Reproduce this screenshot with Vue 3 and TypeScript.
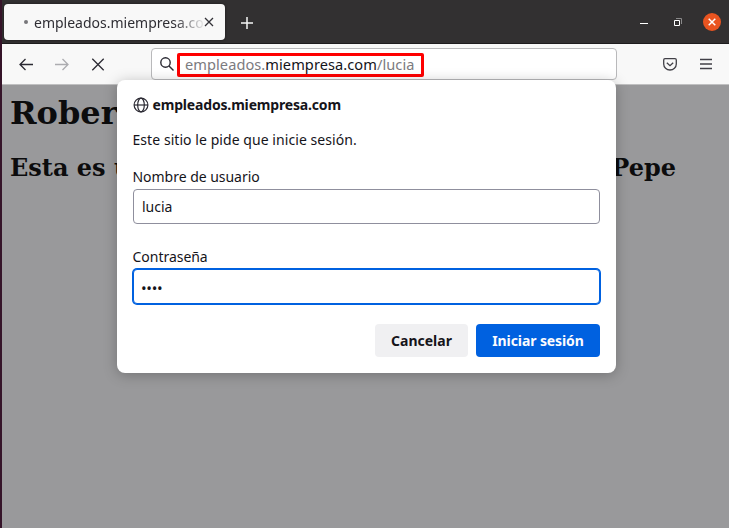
<script setup lang="ts">
import { ref } from 'vue'

const username = ref('lucia')
const password = ref('••••')
</script>

<template>
  <div class="window">
    <header class="titlebar">
      <div class="tab">
        <i class="loading"></i>
        <span class="tab-title">empleados.miempresa.com</span>
        <svg class="tab-close" viewBox="0 0 10 10"><path d="M1 1l8 8M9 1L1 9" /></svg>
      </div>
      <svg class="new-tab" viewBox="0 0 12 12"><path d="M6 0v12M0 6h12" /></svg>
      <div class="controls">
        <svg class="minimize" viewBox="0 0 8 2"><path d="M0 .5h8" /></svg>
        <svg class="restore" viewBox="0 0 8 8"><path class="back" d="M2 .5h5.500v5.500" /><path d="M.5 2.500h5v5h-5z" /></svg>
        <button class="close" aria-label="Cerrar">
          <svg viewBox="0 0 8 8"><path d="M.7.7l6.600 6.600M7.300.7L.7 7.300" /></svg>
        </button>
      </div>
    </header>

    <nav class="toolbar">
      <svg class="back-arrow" viewBox="0 0 14 12"><path d="M14 6.500H1M6.500 1L1 6.500l5.500 5.500" /></svg>
      <svg class="forward" viewBox="0 0 14 12"><path d="M0 6.500h13M7.500 1l5.500 5.500-5.500 5.500" /></svg>
      <svg class="stop" viewBox="0 0 12 12"><path d="M.3.8l11.400 11.400M11.700.8L.3 12.200" /></svg>
      <div class="urlbar">
        <svg class="search" viewBox="0 0 14 14"><circle cx="5.500" cy="5.500" r="4.700" /><path d="M9 9l4.500 4.500" /></svg>
        <div class="highlight">empleados.<b>miempresa.com</b>/lucia</div>
      </div>
      <svg class="pocket" viewBox="0 0 14 13"><path d="M2 .7h10q1.300 0 1.300 1.300v4a6.300 6 0 0 1-12.600 0V2Q.7.7 2 .7z" /><path d="M3.800 4.700L7 7.700l3.200-3" /></svg>
      <svg class="menu" viewBox="0 0 12 10"><path d="M0 .5h12M0 5h12M0 9.500h12" /></svg>
    </nav>

    <main class="page">
      <h1>Roberto</h1>
      <h2><span>Esta es una</span><span>Pepe</span></h2>
    </main>

    <form class="dialog" @submit.prevent>
      <div class="host">
        <svg viewBox="0 0 16 16"><circle cx="8" cy="8" r="6.900" /><ellipse cx="8" cy="8" rx="3.300" ry="6.900" /><path d="M1 8h14" /></svg>
        <strong>empleados.miempresa.com</strong>
      </div>
      <p>Este sitio le pide que inicie sesión.</p>
      <label for="user">Nombre de usuario</label>
      <input id="user" v-model="username" class="field" />
      <label for="pass" class="second">Contraseña</label>
      <input id="pass" v-model="password" class="field active" />
      <div class="actions">
        <button class="cancel" type="button">Cancelar</button>
        <button class="login" type="submit">Iniciar sesión</button>
      </div>
    </form>
  </div>
</template>

<style>
body { margin: 0; overflow: hidden; }
</style>

<style scoped>
* { box-sizing: border-box; }
svg { display: block; flex: none; fill: none; stroke: #2b2a33; stroke-width: 1.3; overflow: visible; }
.window {
  position: relative; width: 729px; height: 528px; overflow: hidden;
  display: flex; flex-direction: column; border-left: 2px solid #351429;
  background: #99999b; font-family: "Noto Sans", "Open Sans", sans-serif; color: #15141a;
}
.titlebar { height: 44px; flex: none; display: flex; align-items: flex-start; background: #323031; border-bottom: 1px solid #1d1c1d; }
.tab {
  width: 221px; height: 36px; margin: 4px 0 0 2px; padding: 0 11px 0 20px; display: flex; align-items: center;
  border-radius: 4px; background: #f8f8f8; box-shadow: 0 0 3px rgba(0, 0, 0, .5);
}
.loading { width: 4px; height: 4px; border-radius: 50%; background: #77767a; margin-right: 6px; flex: none; }
.tab-title {
  width: 169px; overflow: hidden; white-space: nowrap; line-height: 24px; font-size: 14px; color: #2f2e34; padding-top: 1px;
  -webkit-mask-image: linear-gradient(90deg, #000 140px, transparent 172px); mask-image: linear-gradient(90deg, #000 140px, transparent 172px);
}
.tab-close { width: 10px; height: 10px; margin-left: 1px; stroke: #333238; }
.new-tab { width: 12px; height: 12px; margin: 17px 0 0 16px; stroke: #f5f5f5; stroke-width: 1.500; }
.controls { display: flex; align-items: center; height: 44px; margin-left: auto; padding-right: 8px; }
.controls svg { stroke: #fff; stroke-width: 1; }
.minimize { width: 8px; height: 2px; margin: 4px 26px 0 0; }
.restore { width: 8px; height: 8px; margin-right: 21px; }
.restore .back { stroke: #8a898a; }
.close { width: 18px; height: 18px; border: 0; border-radius: 50%; padding: 5px; background: #e95420; }
.controls .close svg { width: 8px; height: 8px; stroke-width: 1.500; }
.toolbar { height: 41px; flex: none; display: flex; align-items: center; padding: 0 17px; background: #f8f8f8; border-bottom: 1px solid #c0c0c1; }
.back-arrow, .forward { width: 14px; height: 12px; }
.back-arrow { margin-right: 22px; }
.forward { margin-right: 23px; stroke: #acacb0; }
.stop { width: 12px; height: 12px; margin-right: 47px; }
.urlbar { width: 466px; height: 32px; margin-right: 46px; padding-left: 8px; display: flex; align-items: center; border: 1px solid #b9b9bb; border-radius: 4px; background: #fff; }
.search { width: 14px; height: 14px; margin-right: 3px; stroke-width: 1.400; }
.highlight { width: 247px; height: 24px; margin-top: 2px; padding-left: 5px; border: 3px solid #fe0000; border-radius: 2px; line-height: 17px; font-size: 14.600px; letter-spacing: .06px; white-space: nowrap; color: #7c7b80; }
.highlight b { font-weight: 400; color: #15141a; }
.pocket { width: 14px; height: 13px; margin-right: 23px; stroke: #414047; }
.menu { width: 12px; height: 10px; stroke: #414047; }
.page { padding: 8px; font-family: "DejaVu Serif", serif; color: #0c0c0d; }
h1 { margin: 1px 0 0; font-size: 32px; line-height: 38px; }
h2 { width: 666px; margin: 21px 0 0; display: flex; justify-content: space-between; font-size: 24px; line-height: 29px; }
.dialog {
  position: absolute; left: 115px; top: 80px; width: 499px; height: 293px; padding: 16px 16px 16px 15.5px;
  display: flex; flex-direction: column; border-radius: 8px; background: #fff; font-size: 14px; white-space: nowrap;
  box-shadow: 0 2px 14px rgba(0, 0, 0, .25);
}
.host { height: 17px; margin-bottom: 1px; display: flex; align-items: center; gap: 4px; letter-spacing: -.17px; }
.host svg { width: 16px; height: 16px; stroke-width: 1.200; }
.host strong { line-height: 17px; margin-top: -1px; }
p { margin: 16px 0 0; line-height: 20px; letter-spacing: .06px; }
label { display: block; margin-top: 17px; line-height: 20px; letter-spacing: -.03px; }
label.second { margin-top: 23px; }
.field {
  width: 467px; height: 35px; flex: none; align-self: flex-end; margin: 2px 0 0; padding: 0 8px; border: 1px solid #8f8f9d;
  border-radius: 4px; background: #fff; font: 14px "Noto Sans", sans-serif; color: #15141a; outline: 0;
}
.field.active { padding-left: 7px; padding-top: 2px; border-color: #0061e0; box-shadow: 0 0 0 1px #0061e0; font-size: 15px; letter-spacing: -.3px; }
.actions { display: flex; justify-content: flex-end; gap: 8px; margin-top: 20px; }
.actions button { height: 33px; padding: 0; border: 0; border-radius: 4px; font: 700 14px "Noto Sans", sans-serif; }
.cancel { width: 93px; background: #f0f0f2; color: #15141a; }
.actions .login { width: 124px; background: #0061e0; color: #fbfbfe; letter-spacing: -.1px; }
</style>
